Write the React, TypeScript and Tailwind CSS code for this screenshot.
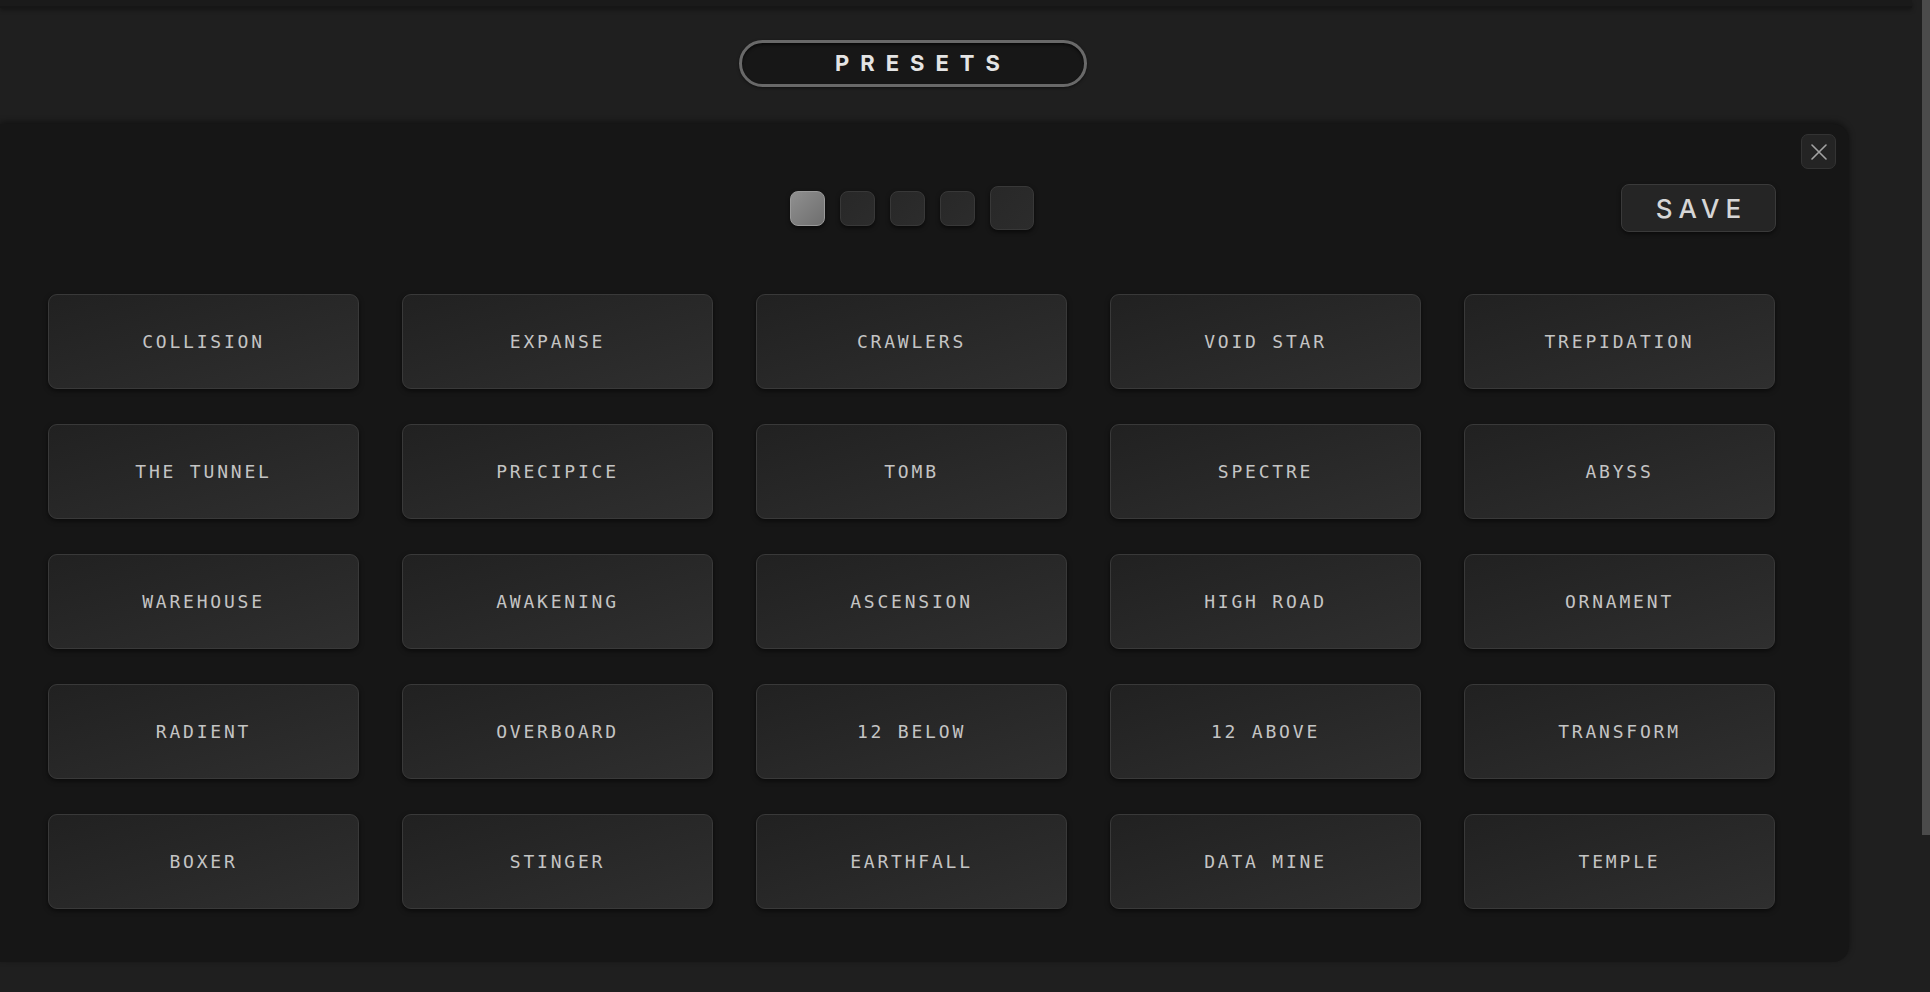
import React, { useState } from 'react';

const presets = [
  'COLLISION', 'EXPANSE', 'CRAWLERS', 'VOID STAR', 'TREPIDATION',
  'THE TUNNEL', 'PRECIPICE', 'TOMB', 'SPECTRE', 'ABYSS',
  'WAREHOUSE', 'AWAKENING', 'ASCENSION', 'HIGH ROAD', 'ORNAMENT',
  'RADIENT', 'OVERBOARD', '12 BELOW', '12 ABOVE', 'TRANSFORM',
  'BOXER', 'STINGER', 'EARTHFALL', 'DATA MINE', 'TEMPLE',
];

const pages = [0, 1, 2, 3, 4];

export default function App() {
  const [page, setPage] = useState(0);
  const [hovered] = useState(4);

  return (
    <div className="flex w-[1930px] h-[992px] overflow-hidden bg-[#1f1f1f] font-['Inter',sans-serif]">
      <div className="flex flex-col w-[1922px]">
        <div className="h-[8px] w-[1912px] bg-[#1a1a1a] border-b-2 border-[#161616] shadow-[0_2px_4px_rgba(0,0,0,0.35)]" />

        {/* Presets toggle */}
        <div className="flex justify-center w-[1826px] pt-[32px] h-[116px]">
          <button className="flex items-center justify-center w-[348px] h-[47px] rounded-full border-[3px] border-[#696969] bg-[#171717] pl-[20px] text-[22px] font-bold tracking-[11px] text-[#e4e4e4] shadow-[inset_0_2px_3px_rgba(0,0,0,0.6),0_1px_3px_rgba(0,0,0,0.5)]">
            PRESETS
          </button>
        </div>

        {/* Panel */}
        <div className="relative w-[1849px] h-[838px] rounded-r-[16px] bg-[#161616] pl-[48px] pr-[73px] pt-[60px] shadow-[0_-2px_6px_rgba(0,0,0,0.45)]">
          <button className="absolute top-[10px] right-[13px] flex items-center justify-center w-[35px] h-[35px] rounded-[7px] border border-[#333333] bg-[#242424]">
            <svg width="16" height="16" viewBox="0 0 16 16" fill="none" stroke="#a3a3a3" strokeWidth="1.6" strokeLinecap="round">
              <path d="M1 1 L15 15 M15 1 L1 15" />
            </svg>
          </button>

          <div className="grid grid-cols-[1fr_auto_1fr] items-center h-[48px]">
            <div />
            <div className="flex items-center gap-[15px]">
              {pages.map((p) => {
                const active = p === page;
                const big = p === hovered && !active;
                return (
                  <button
                    key={p}
                    onClick={() => setPage(p)}
                    className={`rounded-[8px] border shadow-[0_2px_4px_rgba(0,0,0,0.6)] ${
                      big ? 'w-[44px] h-[44px]' : 'w-[35px] h-[35px]'
                    } ${
                      active
                        ? 'border-[#9a9a9a] bg-linear-to-br from-[#909090] to-[#6e6e6e]'
                        : 'border-[#383838] bg-linear-to-br from-[#282828] to-[#2c2c2c]'
                    }`}
                  />
                );
              })}
            </div>
            <div className="flex justify-end">
              <button className="flex items-center justify-center w-[155px] h-[48px] rounded-[8px] border border-[#3a3a3a] bg-[#252525] pl-[6px] text-[26px] font-medium tracking-[6px] text-[#d6d6d6] shadow-[0_2px_4px_rgba(0,0,0,0.5)]">
                SAVE
              </button>
            </div>
          </div>

          <div className="grid grid-cols-[repeat(5,311px)] gap-x-[43px] gap-y-[35px] mt-[62px]">
            {presets.map((name) => (
              <button
                key={name}
                className="flex items-center justify-center h-[95px] rounded-[9px] border border-[#393939] bg-linear-to-br from-[#212121] to-[#2f2f2f] font-['DejaVu_Sans_Mono',monospace] text-[18px] tracking-[2.8px] text-[#c4c4c4] shadow-[0_2px_5px_rgba(0,0,0,0.55)]"
              >
                {name}
              </button>
            ))}
          </div>
        </div>
      </div>

      {/* scrollbar */}
      <div className="w-[8px] bg-[#1f1f1f]">
        <div className="h-[835px] bg-[#4b4b4b]" />
      </div>
    </div>
  );
}
